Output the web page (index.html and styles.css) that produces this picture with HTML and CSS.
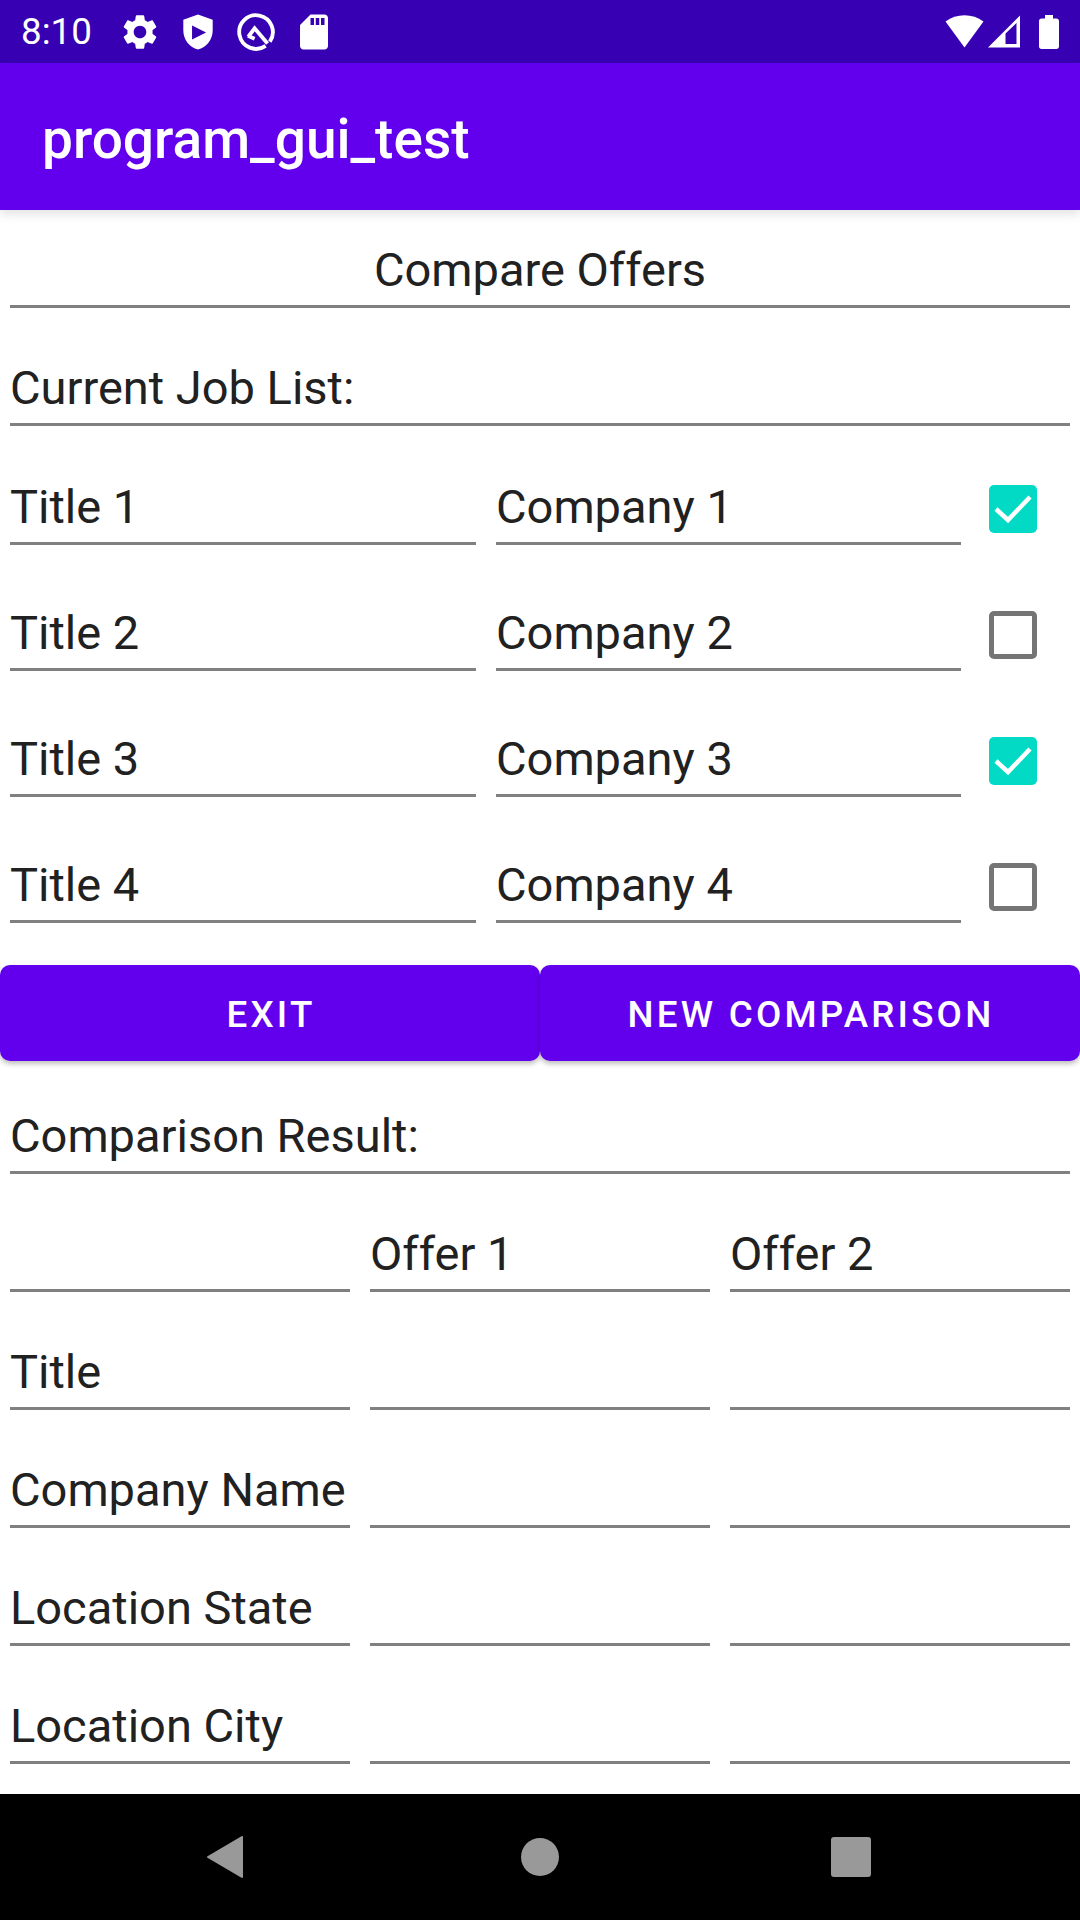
FILE: index.html
```html
<!DOCTYPE html>
<html lang="en">
<head>
  <meta charset="UTF-8">
  <title>program_gui_test</title>
  <link rel="stylesheet" href="styles.css">
</head>
<body>

  <div class="status-bar">
    <span class="clock">8:10</span>
    <div class="status-icons">
      <svg class="icon" viewBox="0 0 24 24"><path fill="#fff" fill-rule="evenodd" d="M19.14,12.94c0.04-0.3,0.06-0.61,0.06-0.94c0-0.32-0.02-0.64-0.07-0.94l2.03-1.58c0.18-0.14,0.23-0.41,0.12-0.61l-1.92-3.32c-0.12-0.22-0.37-0.29-0.59-0.22l-2.39,0.96c-0.5-0.38-1.03-0.7-1.62-0.94L14.4,2.81c-0.04-0.24-0.24-0.41-0.48-0.41h-3.84c-0.24,0-0.43,0.17-0.47,0.41L9.25,5.35C8.66,5.59,8.12,5.92,7.63,6.29L5.24,5.33c-0.22-0.08-0.47,0-0.59,0.22L2.74,8.87C2.62,9.08,2.66,9.34,2.86,9.48l2.03,1.58C4.84,11.36,4.8,11.69,4.8,12s0.02,0.64,0.07,0.94l-2.03,1.58c-0.18,0.14-0.23,0.41-0.12,0.61l1.92,3.32c0.12,0.22,0.37,0.29,0.59,0.22l2.39-0.96c0.5,0.38,1.03,0.7,1.62,0.94l0.36,2.54c0.05,0.24,0.24,0.41,0.48,0.41h3.84c0.24,0,0.44-0.17,0.47-0.41l0.36-2.54c0.59-0.24,1.13-0.56,1.62-0.94l2.39,0.96c0.22,0.08,0.47,0,0.59-0.22l1.92-3.32c0.12-0.22,0.07-0.47-0.12-0.61L19.14,12.94z M12,15.6c-1.98,0-3.6-1.62-3.6-3.6s1.62-3.6,3.6-3.6s3.6,1.62,3.6,3.6S13.98,15.6,12,15.6z"/></svg>
      <svg class="icon" viewBox="0 0 24 24"><path fill="#fff" fill-rule="evenodd" d="M12 2 L3.6 5 V11 C3.6 16.3 7.2 20.9 12 22 C16.8 20.9 20.4 16.3 20.4 11 V5 Z M8.6 8.3 L16.6 12.3 L8.6 16.3 Z"/></svg>
      <svg class="icon" viewBox="0 0 24 24"><g fill="none" stroke="#fff" stroke-width="2.2"><path d="M17.5 19.9 A9.6 9.6 0 1 1 19.9 17.5"/><path d="M7.6 14.6 L11.2 9.9 L18.6 18.6"/><path d="M7.4 14.2 L11.2 15.8"/></g></svg>
      <svg class="icon" viewBox="0 0 24 24"><path fill="#fff" d="M18 2h-8L4.02 8 4 20c0 1.1.9 2 2 2h12c1.1 0 2-.9 2-2V4c0-1.1-.9-2-2-2zm-6 6h-2V4h2v4zm3 0h-2V4h2v4zm3 0h-2V4h2v4z"/></svg>
    </div>
    <div class="system-icons">
      <svg class="wifi" viewBox="0 0 40 33"><path fill="#fff" d="M19.5 32.5 L0.5 6.5 A32.5 32.5 0 0 1 38.5 6.5 Z"/></svg>
      <svg class="signal" viewBox="0 0 33 33"><path fill="#fff" fill-rule="evenodd" d="M0 32.5 L32 0.5 V32.5 Z M17.5 29 V18.5 L28.5 8 V29 Z"/></svg>
      <svg class="battery" viewBox="0 0 20 34"><path fill="#fff" d="M6 0 H14 V3.5 H17.5 C18.9 3.5 20 4.6 20 6 V31.5 C20 32.9 18.9 34 17.5 34 H2.5 C1.1 34 0 32.9 0 31.5 V6 C0 4.6 1.1 3.5 2.5 3.5 H6 Z"/></svg>
    </div>
  </div>

  <div class="app-bar">program_gui_test</div>

  <div class="main">
    <div class="section">
      <div class="field center">Compare Offers</div>
      <div class="field heading">Current Job List:</div>

      <div class="job-list">
        <div class="job-row">
          <div class="field">Title 1</div>
          <div class="field">Company 1</div>
          <div class="checkbox checked">
            <svg viewBox="0 0 48 48"><path fill="none" stroke="#fff" stroke-width="4.5" d="M7 24 L19 35 L41 12"/></svg>
          </div>
        </div>
        <div class="job-row">
          <div class="field">Title 2</div>
          <div class="field">Company 2</div>
          <div class="checkbox"></div>
        </div>
        <div class="job-row">
          <div class="field">Title 3</div>
          <div class="field">Company 3</div>
          <div class="checkbox checked">
            <svg viewBox="0 0 48 48"><path fill="none" stroke="#fff" stroke-width="4.5" d="M7 24 L19 35 L41 12"/></svg>
          </div>
        </div>
        <div class="job-row">
          <div class="field">Title 4</div>
          <div class="field">Company 4</div>
          <div class="checkbox"></div>
        </div>
      </div>
    </div>

    <div class="actions">
      <button class="btn">Exit</button>
      <button class="btn">New Comparison</button>
    </div>

    <div class="section">
      <div class="field result-heading">Comparison Result:</div>

      <div class="result-grid">
        <div class="field"></div>
        <div class="field">Offer 1</div>
        <div class="field">Offer 2</div>

        <div class="field">Title</div>
        <div class="field"></div>
        <div class="field"></div>

        <div class="field">Company Name</div>
        <div class="field"></div>
        <div class="field"></div>

        <div class="field">Location State</div>
        <div class="field"></div>
        <div class="field"></div>

        <div class="field">Location City</div>
        <div class="field"></div>
        <div class="field"></div>
      </div>
    </div>
  </div>

  <div class="nav-bar">
    <svg class="nav-back" viewBox="0 0 36 42"><path fill="#999" stroke="#999" stroke-width="2" stroke-linejoin="round" d="M35 1 V41 L1 21 Z"/></svg>
    <div class="nav-home"></div>
    <div class="nav-recent"></div>
  </div>

</body>
</html>
```

FILE: styles.css
```css
* { box-sizing: border-box; }

body {
  margin: 0;
  width: 1080px;
  height: 1920px;
  overflow: hidden;
  display: flex;
  flex-direction: column;
  background: #fff;
  font-family: Roboto, sans-serif;
  font-size: 47px;
  line-height: 55px;
  color: #212121;
}

.status-bar {
  height: 63px;
  flex: none;
  display: flex;
  align-items: center;
  padding: 0 21px 0 21px;
  background: #3700b3;
  color: #fff;
  font-size: 36.75px;
  line-height: 43px;
}
.clock { width: 98px; }
.status-icons {
  display: flex;
  gap: 16px;
}
.icon {
  width: 42px;
  height: 42px;
  display: block;
}
.system-icons {
  margin-left: auto;
  display: flex;
  align-items: center;
}
.wifi { width: 40px; height: 33px; display: block; }
.signal { width: 33px; height: 33px; margin-left: 3px; display: block; }
.battery { width: 20px; height: 34px; margin-left: 18px; display: block; }

.app-bar {
  height: 147px;
  flex: none;
  display: flex;
  align-items: center;
  padding: 6px 0 0 42px;
  background: #6200ee;
  color: #fff;
  font-size: 55px;
  font-weight: 500;
  box-shadow: 0 4px 10px rgba(0, 0, 0, 0.12);
  position: relative;
}

.main { flex: 1; }
.section { padding: 0 10px; }

.field {
  height: 98px;
  padding-bottom: 8px;
  border-bottom: 3px solid #808080;
  display: flex;
  align-items: flex-end;
  white-space: nowrap;
}
.center { justify-content: center; }
.heading { margin-top: 20px; }
.result-heading { margin-top: 15px; }

.job-list {
  margin-top: 21px;
  display: flex;
  flex-direction: column;
  gap: 28px;
}
.job-row {
  display: grid;
  grid-template-columns: 466px 465px 48px;
  column-gap: 20px;
  align-items: end;
}

.checkbox {
  width: 48px;
  height: 48px;
  margin: 0 0 12px 8px;
  border: 5px solid #757575;
  border-radius: 5px;
}
.checkbox.checked {
  border: 0;
  background: #03dac5;
}
.checkbox svg {
  width: 48px;
  height: 48px;
  display: block;
}

.actions {
  margin-top: 42px;
  display: flex;
}
.btn {
  width: 540px;
  height: 96px;
  padding: 2px 0 0 2px;
  border: 0;
  border-radius: 10px;
  background: #6200ee;
  color: #fff;
  font-family: Roboto, sans-serif;
  font-size: 36.75px;
  font-weight: 500;
  letter-spacing: 3.2px;
  text-transform: uppercase;
  box-shadow: 0 3px 5px rgba(0, 0, 0, 0.25);
}

.result-grid {
  margin-top: 20px;
  display: grid;
  grid-template-columns: repeat(3, 340px);
  gap: 20px;
}

.nav-bar {
  height: 126px;
  flex: none;
  background: #000;
  display: flex;
  align-items: center;
  padding-left: 207px;
}
.nav-back { width: 36px; height: 42px; display: block; }
.nav-home {
  width: 38px;
  height: 38px;
  margin-left: 278px;
  border-radius: 50%;
  background: #999;
}
.nav-recent {
  width: 40px;
  height: 40px;
  margin-left: 272px;
  border-radius: 3px;
  background: #999;
}
```
